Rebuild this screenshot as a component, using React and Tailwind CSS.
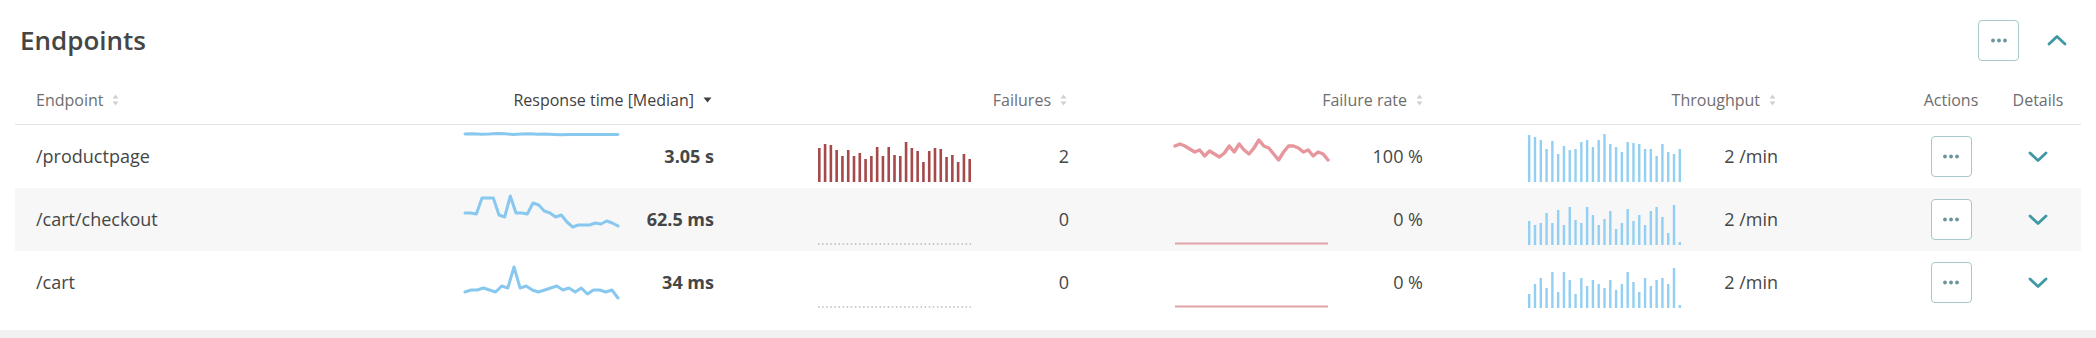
import React from "react";

const COLS =
  "grid grid-cols-[440px_173px_92px_261px_94px_263px_91px_262px_93px_213px_82px]";

function SortIcon() {
  return (
    <svg width="7" height="12" viewBox="0 0 7 12" className="ml-[9px] shrink-0">
      <path d="M3.5 0.5 L6.5 4.5 L0.5 4.5 Z" fill="#d0d0d0" />
      <path d="M3.5 11.5 L6.5 7.5 L0.5 7.5 Z" fill="#d0d0d0" />
    </svg>
  );
}

function SortDown() {
  return (
    <svg width="9" height="6" viewBox="0 0 9 6" className="ml-[9px] shrink-0">
      <path d="M0.5 0.5 L8.5 0.5 L4.5 5.5 Z" fill="#3f4141" />
    </svg>
  );
}

function Dots() {
  return (
    <svg width="18" height="5" viewBox="0 0 18 5">
      <circle cx="3" cy="2.5" r="1.9" fill="#6a969d" />
      <circle cx="9" cy="2.5" r="1.9" fill="#6a969d" />
      <circle cx="15" cy="2.5" r="1.9" fill="#6a969d" />
    </svg>
  );
}

function DotsButton() {
  return (
    <button className="w-[41px] h-[41px] rounded-[4px] border border-[#a9c6cb] bg-white flex items-center justify-center">
      <Dots />
    </button>
  );
}

function Chevron({ up }) {
  return (
    <svg width="20" height="12" viewBox="0 0 20 12">
      <polyline
        points={up ? "2,10 10,2.5 18,10" : "2,2 10,9.5 18,2"}
        fill="none"
        stroke="#3f98a3"
        strokeWidth="2.8"
        strokeLinecap="round"
        strokeLinejoin="round"
      />
    </svg>
  );
}

const W = 153;
const H = 50;

function Line({ data, color, width = 3 }) {
  const step = W / (data.length - 1);
  const pts = data.map((v, i) => `${(i * step).toFixed(1)},${v}`).join(" ");
  return (
    <svg width={W} height={H} viewBox={`0 0 ${W} ${H}`} className="overflow-visible">
      <polyline
        points={pts}
        fill="none"
        stroke={color}
        strokeWidth={width}
        strokeLinejoin="round"
        strokeLinecap="round"
      />
    </svg>
  );
}

function Bars({ data, color, bw = 2.6 }) {
  const step = (W - bw) / (data.length - 1);
  return (
    <svg width={W} height={H} viewBox={`0 0 ${W} ${H}`}>
      {data.map((h, i) => (
        <rect
          key={i}
          x={(i * step).toFixed(2)}
          y={H - h}
          width={bw}
          height={h}
          fill={color}
        />
      ))}
    </svg>
  );
}

function Dotted() {
  return (
    <svg width={W} height={H} viewBox={`0 0 ${W} ${H}`}>
      <line
        x1="0"
        y1="49"
        x2={W}
        y2="49"
        stroke="#9a9a9a"
        strokeWidth="1.2"
        strokeDasharray="1.5 2.6"
      />
    </svg>
  );
}

function FlatRate() {
  return (
    <svg width={W} height={H} viewBox={`0 0 ${W} ${H}`}>
      <line x1="0" y1="48.5" x2={W} y2="48.5" stroke="#dfa2a8" strokeWidth="2" />
    </svg>
  );
}

const rt1 = [2, 1.8, 2.2, 2, 1.6, 1.8, 2.4, 2, 1.8, 2.3, 2.1, 2.5, 2.8, 2.4, 2.6, 2.4, 2.5, 2.4, 2.5, 2.6];
const rt2 = [18, 18, 19, 3, 3, 3, 20, 22, 1, 18, 18, 19, 8, 10, 16, 18, 22, 20, 27, 32, 30, 30, 30, 28, 29, 26, 28, 31];
const rt3 = [34, 32, 32, 30, 32, 34, 28, 30, 9, 30, 28, 32, 34, 32, 30, 28, 32, 30, 34, 30, 36, 32, 32, 34, 32, 40];

const fail1 = [34, 38, 37, 32, 26, 32, 26, 29, 23, 26, 35, 26, 35, 27, 26, 40, 34, 31, 20, 31, 34, 33, 25, 27, 20, 28, 23];
const fr1 = [14, 12, 14, 17, 20, 18, 24, 19, 22, 25, 21, 14, 20, 12, 18, 22, 16, 8, 14, 16, 22, 28, 20, 14, 14, 16, 20, 18, 24, 20, 22, 28];

const tp1 = [47, 45, 42, 33, 41, 28, 36, 32, 33, 40, 42, 35, 42, 48, 38, 35, 30, 40, 39, 38, 33, 33, 26, 38, 30, 28, 33];
const tp2 = [24, 20, 22, 32, 22, 35, 20, 38, 25, 22, 38, 30, 20, 26, 34, 16, 22, 36, 24, 30, 20, 34, 38, 28, 12, 40, 3];
const tp3 = [14, 24, 30, 20, 36, 16, 36, 28, 14, 30, 22, 28, 24, 20, 28, 18, 24, 36, 26, 16, 30, 22, 28, 30, 24, 40, 3];

const rows = [
  {
    name: "/productpage",
    rt: <Line data={rt1} color="#88c8ee" />,
    rtv: "3.05 s",
    fail: <Bars data={fail1} color="#a5494a" bw={2.6} />,
    failv: "2",
    fr: <Line data={fr1} color="#e6969c" width={3.4} />,
    frv: "100 %",
    tp: <Bars data={tp1} color="#93cff2" bw={2.4} />,
    tpv: "2 /min",
  },
  {
    name: "/cart/checkout",
    rt: <Line data={rt2} color="#88c8ee" />,
    rtv: "62.5 ms",
    fail: <Dotted />,
    failv: "0",
    fr: <FlatRate />,
    frv: "0 %",
    tp: <Bars data={tp2} color="#93cff2" bw={2.4} />,
    tpv: "2 /min",
    shade: true,
  },
  {
    name: "/cart",
    rt: <Line data={rt3} color="#88c8ee" />,
    rtv: "34 ms",
    fail: <Dotted />,
    failv: "0",
    fr: <FlatRate />,
    frv: "0 %",
    tp: <Bars data={tp3} color="#93cff2" bw={2.4} />,
    tpv: "2 /min",
  },
];

export default function App() {
  return (
    <div className="w-[2096px] h-[338px] bg-[#f1f1f1] font-['Open_Sans','Noto_Sans',sans-serif]">
      <div className="h-[330px] bg-white px-[15px]">
        <div className="h-[76px] pt-[4px] flex items-center justify-between pl-[5px] pr-[4px]">
          <h2 className="text-[26px] leading-none font-semibold text-[#454646]">Endpoints</h2>
          <div className="flex items-center gap-[18px]">
            <DotsButton />
            <div className="w-[40px] h-[40px] flex items-center justify-center">
              <Chevron up />
            </div>
          </div>
        </div>

        <div className={`${COLS} h-[49px] items-center border-b border-[#e4e4e4] text-[16px] text-[#6e6e6e]`}>
          <div className="pl-[21px] flex items-center">
            <span>Endpoint</span>
            <SortIcon />
          </div>
          <div className="col-span-2 flex items-center justify-end pr-[8px] font-medium text-[#3f4141]">
            <span>Response time [Median]</span>
            <SortDown />
          </div>
          <div className="col-span-2 flex items-center justify-end pr-[8px]">
            <span>Failures</span>
            <SortIcon />
          </div>
          <div className="col-span-2 flex items-center justify-end pr-[6px]">
            <span>Failure rate</span>
            <SortIcon />
          </div>
          <div className="col-span-2 flex items-center justify-end pr-[8px]">
            <span>Throughput</span>
            <SortIcon />
          </div>
          <div className="flex justify-end pr-[16px]">
            <div className="w-[60px] flex justify-center">Actions</div>
          </div>
          <div className="flex justify-center">Details</div>
        </div>

        {rows.map((r) => (
          <div
            key={r.name}
            className={`${COLS} h-[63px] items-center text-[18px] text-[#454646] ${r.shade ? "bg-[#f7f7f7]" : ""}`}
          >
            <div className="pl-[21px]">{r.name}</div>
            <div className="pl-[10px] flex items-center">{r.rt}</div>
            <div className="text-right pr-[6px] font-bold">{r.rtv}</div>
            <div className="flex justify-end pr-[10px]">{r.fail}</div>
            <div className="text-right pr-[6px]">{r.failv}</div>
            <div className="flex justify-end pr-[10px]">{r.fr}</div>
            <div className="text-right pr-[6px]">{r.frv}</div>
            <div className="flex justify-end pr-[10px]">{r.tp}</div>
            <div className="text-right pr-[6px]">{r.tpv}</div>
            <div className="flex justify-end pr-[16px]">
              <div className="w-[60px] flex justify-center">
                <DotsButton />
              </div>
            </div>
            <div className="flex justify-center">
              <Chevron />
            </div>
          </div>
        ))}
      </div>
    </div>
  );
}
